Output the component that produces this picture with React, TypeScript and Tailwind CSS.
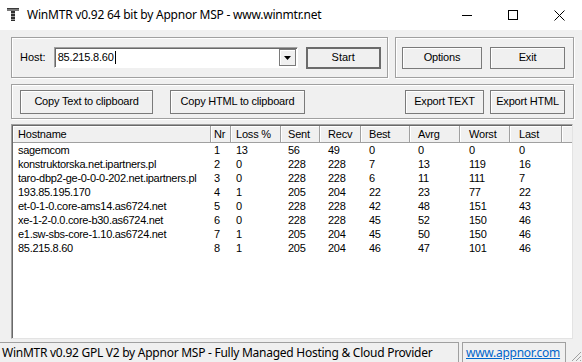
import React from "react";

const rows: string[][] = [
  ["sagemcom", "1", "13", "56", "49", "0", "0", "0", "0"],
  ["konstruktorska.net.ipartners.pl", "2", "0", "228", "228", "7", "13", "119", "16"],
  ["taro-dbp2-ge-0-0-0-202.net.ipartners.pl", "3", "0", "228", "228", "6", "11", "111", "7"],
  ["193.85.195.170", "4", "1", "205", "204", "22", "23", "77", "22"],
  ["et-0-1-0.core-ams14.as6724.net", "5", "0", "228", "228", "42", "48", "151", "43"],
  ["xe-1-2-0.0.core-b30.as6724.net", "6", "0", "228", "228", "45", "52", "150", "46"],
  ["e1.sw-sbs-core-1.10.as6724.net", "7", "1", "205", "204", "45", "50", "150", "46"],
  ["85.215.8.60", "8", "1", "205", "204", "46", "47", "101", "46"],
];

const headers = ["Hostname", "Nr", "Loss %", "Sent", "Recv", "Best", "Avrg", "Worst", "Last"];
const colW = [198, 20, 50, 39, 41, 49, 50, 50, 52];
const colPad = [5, 3, 5, 7, 8, 8, 8, 9, 9];

function Btn({ children, className }: { children: React.ReactNode; className: string }) {
  return (
    <div
      className={
        "flex items-center justify-center border border-[#7a7a7a] bg-[#f0f0f0] shadow-[inset_1px_1px_0_#ffffff] text-[11px] text-black tracking-[-0.2px] " +
        className
      }
    >
      {children}
    </div>
  );
}

export default function App() {
  return (
    <div
      className="w-[582px] h-[362px] bg-[#f0f0f0] flex flex-col overflow-hidden"
      style={{ fontFamily: '"Liberation Sans", Arial, sans-serif' }}
    >
      {/* Title bar */}
      <div className="h-[30px] bg-white flex items-center shrink-0">
        <svg width="12" height="13" viewBox="0 0 12 13" className="ml-[7px] mr-[8px] mb-[2px]">
          <rect x="0" y="0" width="12" height="3" fill="#7a7a7a" />
          <rect x="0" y="0" width="12" height="1" fill="#3a3a3a" />
          <rect x="4" y="3" width="4" height="10" fill="#2e2e2e" />
          <rect x="4" y="5" width="4" height="1" fill="#9a9a9a" />
          <rect x="4" y="8" width="4" height="1" fill="#9a9a9a" />
          <rect x="4" y="11" width="4" height="1" fill="#9a9a9a" />
        </svg>
        <span
          className="text-[12px] text-black leading-none mb-[1px] tracking-[-0.22px]"
          style={{ fontFamily: '"Noto Sans", "Open Sans", sans-serif' }}
        >
          WinMTR v0.92 64 bit by Appnor MSP - www.winmtr.net
        </span>
        <div className="ml-auto flex h-full">
          <div className="w-[46px] h-full flex items-center justify-center">
            <div className="w-[10px] h-[1px] bg-black" />
          </div>
          <div className="w-[46px] h-full flex items-center justify-center">
            <div className="w-[10px] h-[10px] border border-black" />
          </div>
          <div className="w-[46px] h-full flex items-center justify-center">
            <svg width="11" height="11" viewBox="0 0 11 11">
              <path d="M0.5 0.5 L10.5 10.5 M10.5 0.5 L0.5 10.5" stroke="#000" strokeWidth="1" />
            </svg>
          </div>
        </div>
      </div>

      {/* Body */}
      <div className="flex-1 flex flex-col pl-[11px] pt-[7px]">
        {/* Row 1 */}
        <div className="flex gap-[7px]">
          <div className="w-[377px] h-[41px] border border-[#a0a0a0] shadow-[inset_1px_1px_0_#ffffff,1px_1px_0_#ffffff] flex items-center pl-[8px]">
            <span className="text-[11px] text-black">Host:</span>
            <div className="ml-[8px] w-[244px] h-[21px] flex bg-white border-t border-l border-[#a0a0a0] border-r border-b border-r-white border-b-white shadow-[inset_1px_1px_0_#696969]">
              <div className="flex-1 flex items-center pl-[3px] text-[11px] text-black tracking-[-0.2px]">
                85.215.8.60
                <span className="inline-block w-[1px] h-[13px] bg-black ml-[1px]" />
              </div>
              <div className="w-[17px] h-[17px] mt-[1px] mr-[1px] bg-[#f0f0f0] border border-[#7a7a7a] shadow-[inset_1px_1px_0_#ffffff] flex items-center justify-center">
                <svg width="7" height="4" viewBox="0 0 7 4">
                  <path d="M0 0 H7 L3.5 4 Z" fill="#000" />
                </svg>
              </div>
            </div>
            <div className="ml-[8px] w-[75px] h-[22px] flex items-center justify-center border-2 border-[#6b6b6b] bg-[#f0f0f0] text-[11px] text-black">
              Start
            </div>
          </div>
          <div className="w-[179px] h-[41px] border border-[#a0a0a0] shadow-[inset_1px_1px_0_#ffffff,1px_1px_0_#ffffff] flex items-center pl-[6px] gap-[8px]">
            <Btn className="w-[80px] h-[22px]">Options</Btn>
            <Btn className="w-[75px] h-[22px]">Exit</Btn>
          </div>
        </div>

        {/* Row 2 */}
        <div className="mt-[6px] w-[563px] h-[35px] border border-[#a0a0a0] shadow-[inset_1px_1px_0_#ffffff,1px_1px_0_#ffffff] flex items-center pl-[8px]">
          <Btn className="w-[133px] h-[24px]">Copy Text to clipboard</Btn>
          <Btn className="ml-[17px] w-[135px] h-[24px]">Copy HTML to clipboard</Btn>
          <Btn className="ml-auto w-[79px] h-[24px]">Export TEXT</Btn>
          <Btn className="ml-[6px] mr-[8px] w-[75px] h-[24px]">Export HTML</Btn>
        </div>

        {/* List view */}
        <div className="mt-[5px] w-[562px] h-[215px] bg-white border-t border-l border-[#a0a0a0] border-r border-b border-r-[#e3e3e3] border-b-[#e3e3e3] shadow-[inset_1px_1px_0_#696969] pl-[1px] pt-[1px] flex flex-col">
          <div className="flex h-[17px] shrink-0">
            {headers.map((h, i) => (
              <div
                key={h}
                className="h-full flex items-center bg-[#f0f0f0] border-r border-b border-[#a0a0a0] shadow-[inset_1px_1px_0_#ffffff] text-[11px] text-black whitespace-nowrap tracking-[-0.2px]"
                style={{ width: colW[i], paddingLeft: colPad[i] }}
              >
                {h}
              </div>
            ))}
            <div className="h-full flex-1 bg-[#f0f0f0] border-b border-[#a0a0a0] shadow-[inset_1px_1px_0_#ffffff]" />
          </div>
          <div className="flex flex-col">
            {rows.map((r, ri) => (
              <div key={ri} className="flex h-[14px] items-center">
                {r.map((c, ci) => (
                  <div
                    key={ci}
                    className="text-[11px] text-black whitespace-nowrap overflow-hidden leading-[14px] tracking-[-0.3px]"
                    style={{ width: colW[ci], paddingLeft: colPad[ci] }}
                  >
                    {c}
                  </div>
                ))}
              </div>
            ))}
          </div>
        </div>
      </div>

      {/* Status bar */}
      <div
        className="h-[20px] shrink-0 flex text-[12px] relative tracking-[-0.26px]"
        style={{ fontFamily: '"Noto Sans", "Open Sans", sans-serif' }}
      >
        <div className="w-[459px] h-full border-t border-r border-[#a0a0a0] flex items-center pl-[2px] text-black whitespace-nowrap overflow-hidden">
          WinMTR v0.92 GPL V2 by Appnor MSP - Fully Managed Hosting &amp; Cloud Provider
        </div>
        <div className="ml-[3px] w-[104px] h-full border-t border-l border-r border-[#a0a0a0] flex items-center pl-[3px]">
          <span className="text-[#0066cc] underline">www.appnor.com</span>
        </div>
        <svg width="12" height="12" viewBox="0 0 12 12" className="absolute right-0 bottom-0">
          <path d="M11 2 L2 11 M11 6 L6 11 M11 10 L10 11" stroke="#a0a0a0" strokeWidth="1" />
        </svg>
      </div>
    </div>
  );
}
